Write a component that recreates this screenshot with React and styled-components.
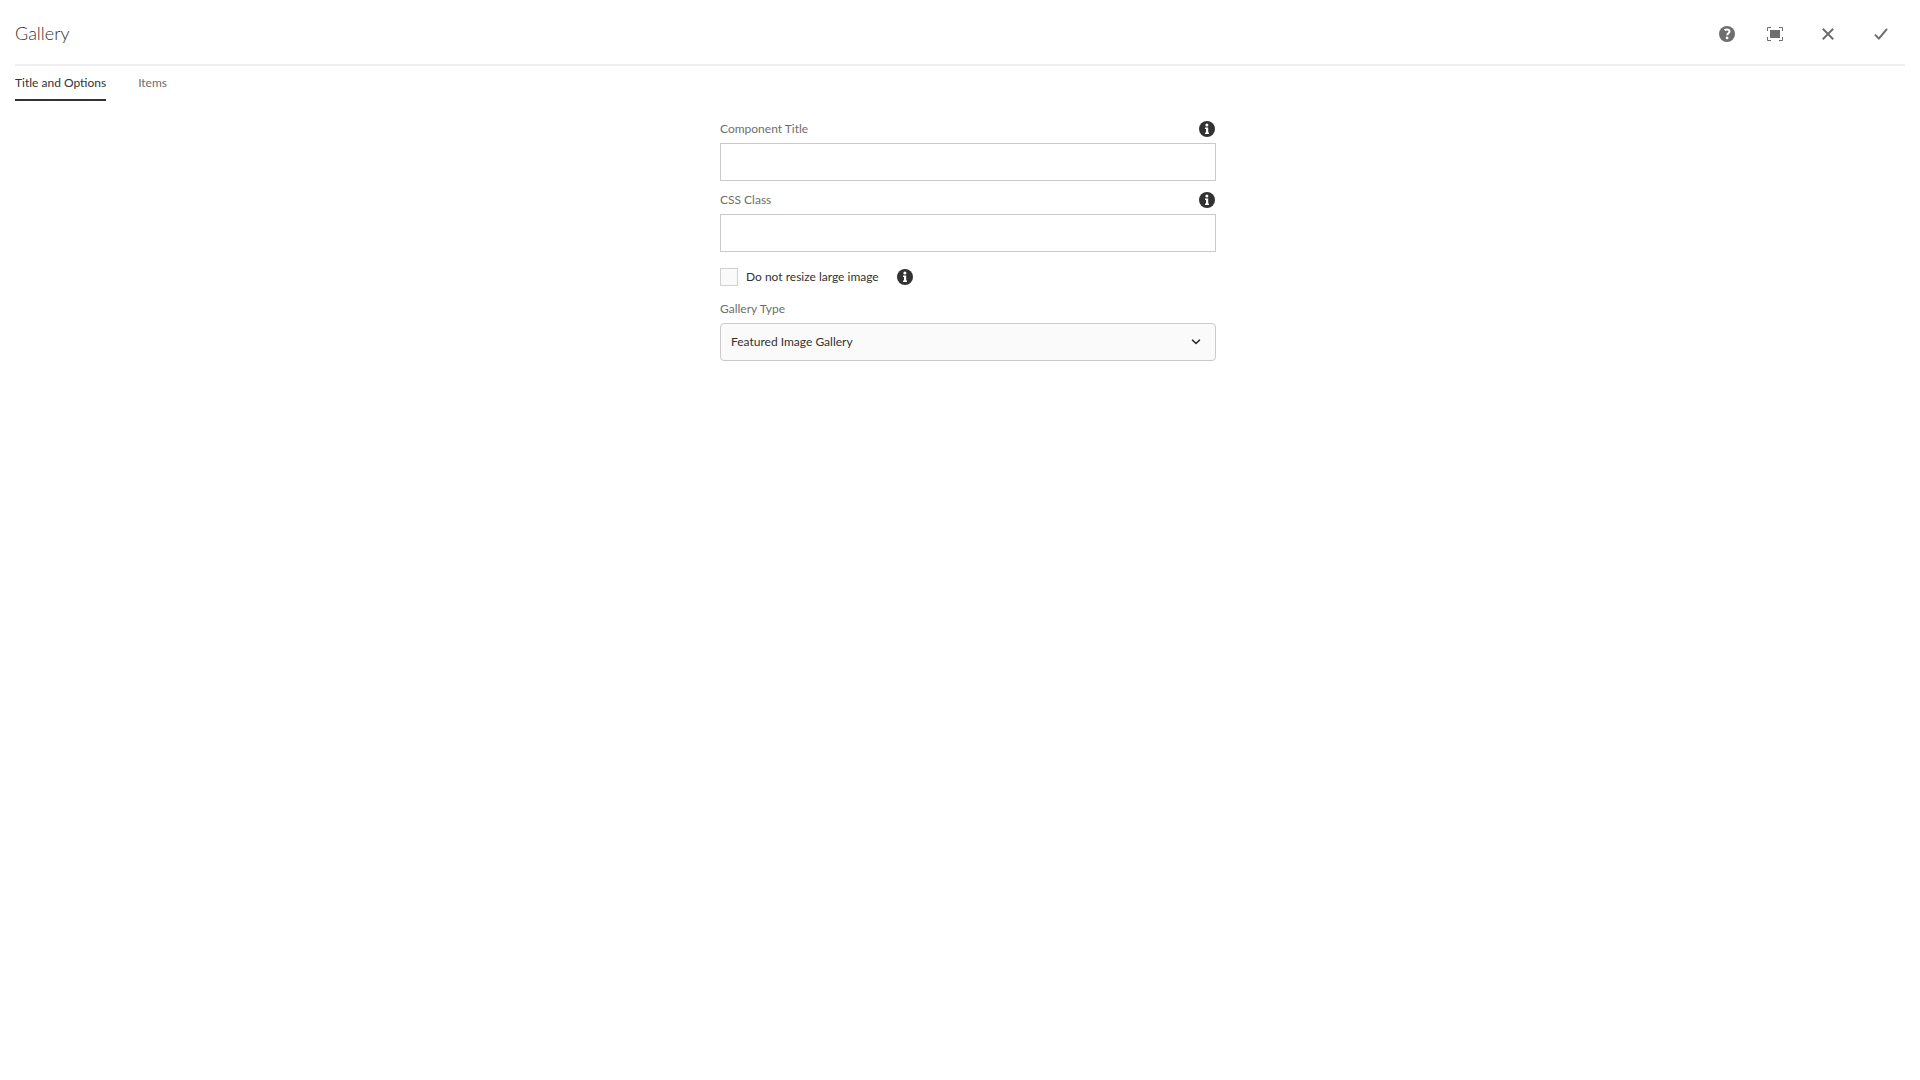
import React from "react";
import styled, { createGlobalStyle } from "styled-components";

const GlobalStyle = createGlobalStyle`
  *, *::before, *::after { box-sizing: border-box; }
  body {
    margin: 0;
    background: #fff;
    color: #323232;
    font-family: Lato, "Open Sans", sans-serif;
    font-size: 12px;
    line-height: 18px;
  }
  button, input, select { font: inherit; color: inherit; }
`;

const Dialog = styled.form`
  display: flex;
  flex-direction: column;
  padding: 0 15px;
`;

const Header = styled.header`
  display: flex;
  align-items: center;
  justify-content: space-between;
  height: 66px;
  border-bottom: 2px solid #f0f0f0;
`;

const Title = styled.h1`
  margin: 0;
  padding-top: 2px;
  color: #323232;
  font-size: 18px;
  font-weight: 300;
  line-height: 24px;
`;

const Actions = styled.div`
  display: flex;
  align-items: center;
  gap: 21px;
  padding: 4px 8px 0 0;
`;

const IconButton = styled.button`
  display: grid;
  place-items: center;
  width: 32px;
  height: 32px;
  padding: 0;
  border: 0;
  background: none;
  color: #6e6e6e;
  cursor: pointer;
`;

const IconPair = styled.div`
  display: flex;
  gap: 16px;
`;

const TabList = styled.div`
  display: flex;
  gap: 32px;
`;

const Tab = styled.button`
  height: 35px;
  padding: 0;
  border: 0;
  border-bottom: 2px solid ${(p) => (p.$active ? "#323232" : "transparent")};
  background: none;
  color: ${(p) => (p.$active ? "#323232" : "#6e6e6e")};
  cursor: pointer;
`;

const PanelArea = styled.div`
  padding-left: 16px;
`;

const Panel = styled.section`
  display: flex;
  flex-direction: column;
  width: 496px;
  max-width: 100%;
  margin: 0 auto;
  padding-top: 16px;
`;

const Field = styled.div`
  display: flex;
  flex-direction: column;
  margin-bottom: 7px;
`;

const LabelRow = styled.div`
  display: flex;
  align-items: center;
  justify-content: space-between;
  height: 24px;
  margin-bottom: 2px;
  padding-right: 1px;
`;

const Label = styled.label`
  color: #6e6e6e;
`;

const TextInput = styled.input`
  width: 100%;
  height: 38px;
  padding: 0 11px;
  border: 1px solid #cacaca;
  border-radius: 0;
  background: #fff;
  outline: none;
`;

const InfoButton = styled.button`
  display: grid;
  padding: 0;
  border: 0;
  background: none;
  color: #323232;
  cursor: pointer;
`;

const CheckRow = styled.div`
  display: flex;
  align-items: center;
  gap: 18px;
  height: 36px;
  margin-bottom: 2px;
`;

const CheckLabel = styled.label`
  display: flex;
  align-items: center;
  gap: 8px;
`;

const Checkbox = styled.input`
  appearance: none;
  width: 18px;
  height: 18px;
  margin: 0;
  border: 1px solid #d0d0d0;
  background: #fafafa;
  &:checked { background: #6e6e6e; }
`;

const SelectBox = styled.div`
  display: grid;
  align-items: center;
  > * { grid-area: 1 / 1; }
  > svg {
    justify-self: end;
    margin-right: 15px;
    pointer-events: none;
  }
`;

const Select = styled.select`
  appearance: none;
  width: 100%;
  height: 38px;
  padding: 0 32px 0 10px;
  border: 1px solid #cacaca;
  border-radius: 4px;
  background: #fafafa;
  cursor: pointer;
`;

const HelpIcon = () => (
  <svg width="16" height="16" viewBox="0 0 16 16" aria-hidden="true">
    <circle cx="8" cy="8" r="8" fill="currentColor" />
    <path d="M5.6 4.3C6.2 3.7 7 3.4 8 3.4c1.5 0 2.5.8 2.5 2.1 0 1.8-2.2 1.9-2.2 3.7" fill="none" stroke="#fff" strokeWidth="2" />
    <circle cx="8.1" cy="11.9" r="1.4" fill="#fff" />
  </svg>
);

const FullScreenIcon = () => (
  <svg width="16" height="14" viewBox="0 0 16 14" aria-hidden="true">
    <rect x="3" y="3" width="10" height="8" fill="currentColor" />
    <path d="M.5 4V.5H4M12 .5h3.5V4M15.5 10v3.5H12M4 13.5H.5V10" fill="none" stroke="currentColor" />
  </svg>
);

const CloseIcon = () => (
  <svg width="12" height="12" viewBox="0 0 12 12" aria-hidden="true">
    <path d="M.8.8l10.400 10.400M11.200.8L.8 11.200" fill="none" stroke="currentColor" strokeWidth="2" />
  </svg>
);

const CheckIcon = () => (
  <svg width="14" height="12" viewBox="0 0 14 12" aria-hidden="true">
    <path d="M1 6.600l3.900 4L13 .8" fill="none" stroke="currentColor" strokeWidth="2" strokeLinejoin="round" />
  </svg>
);

const InfoIcon = () => (
  <svg width="16" height="16" viewBox="0 0 16 16" aria-hidden="true">
    <circle cx="8" cy="8" r="8" fill="currentColor" />
    <circle cx="7.9" cy="3.9" r="1.5" fill="#fff" />
    <path d="M6 6.400h3.200v5H10V13H6v-1.600h1V8H6z" fill="#fff" />
  </svg>
);

const ChevronIcon = () => (
  <svg width="10" height="6" viewBox="0 0 10 6" aria-hidden="true">
    <path d="M1.500 1.200L5 4.500l3.500-3.300" fill="none" stroke="#323232" strokeWidth="1.6" strokeLinecap="round" strokeLinejoin="round" />
  </svg>
);

const TextField = ({ id, label }) => (
  <Field>
    <LabelRow>
      <Label htmlFor={id}>{label}</Label>
      <InfoButton type="button" aria-label={`About ${label}`}><InfoIcon /></InfoButton>
    </LabelRow>
    <TextInput id={id} type="text" />
  </Field>
);

export default function App() {
  return (
    <>
      <GlobalStyle />
      <Dialog onSubmit={(e) => e.preventDefault()}>
        <Header>
          <Title>Gallery</Title>
          <Actions>
            <IconPair>
              <IconButton type="button" aria-label="Help"><HelpIcon /></IconButton>
              <IconButton type="button" aria-label="Toggle full screen"><FullScreenIcon /></IconButton>
            </IconPair>
            <IconButton type="button" aria-label="Cancel"><CloseIcon /></IconButton>
            <IconButton type="submit" aria-label="Done"><CheckIcon /></IconButton>
          </Actions>
        </Header>
        <TabList role="tablist">
          <Tab type="button" role="tab" aria-selected="true" $active>Title and Options</Tab>
          <Tab type="button" role="tab" aria-selected="false">Items</Tab>
        </TabList>
        <PanelArea>
          <Panel role="tabpanel">
            <TextField id="component-title" label="Component Title" />
            <TextField id="css-class" label="CSS Class" />
            <CheckRow>
              <CheckLabel>
                <Checkbox type="checkbox" />
                Do not resize large image
              </CheckLabel>
              <InfoButton type="button" aria-label="About image resizing"><InfoIcon /></InfoButton>
            </CheckRow>
            <Field>
              <LabelRow>
                <Label htmlFor="gallery-type">Gallery Type</Label>
              </LabelRow>
              <SelectBox>
                <Select id="gallery-type" defaultValue="featured">
                  <option value="featured">Featured Image Gallery</option>
                </Select>
                <ChevronIcon />
              </SelectBox>
            </Field>
          </Panel>
        </PanelArea>
      </Dialog>
    </>
  );
}
